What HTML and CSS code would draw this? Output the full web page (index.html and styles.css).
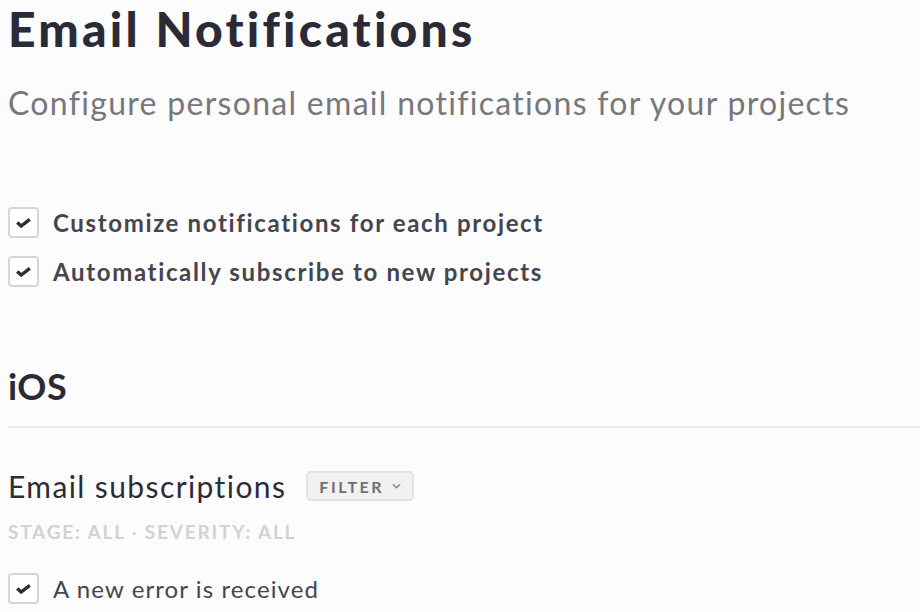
FILE: index.html
```html
<!DOCTYPE html>
<html lang="en">
<head>
    <meta charset="UTF-8">
    <meta name="viewport" content="width=device-width, initial-scale=1.0">
    <title>Email Notifications</title>
    <link rel="stylesheet" href="styles.css">
</head>
<body>

    <div class="page">
        <h1 class="title">Email Notifications</h1>
        <p class="subtitle">Configure personal email notifications for your projects</p>

        <div class="options">
            <label class="check-row bold">
                <span class="box">
                    <svg viewBox="0 0 15 10" width="15" height="10"><path d="M1.2 4.4 L5.2 8 L13.8 1.4" fill="none" stroke="#2e2e36" stroke-width="3.4"/></svg>
                </span>
                Customize notifications for each project
            </label>
            <label class="check-row bold">
                <span class="box">
                    <svg viewBox="0 0 15 10" width="15" height="10"><path d="M1.2 4.4 L5.2 8 L13.8 1.4" fill="none" stroke="#2e2e36" stroke-width="3.4"/></svg>
                </span>
                Automatically subscribe to new projects
            </label>
        </div>

        <h2 class="section">iOS</h2>

        <div class="subs-head">
            <span class="subs-title">Email subscriptions</span>
            <span class="filter">FILTER
                <svg viewBox="0 0 10 6" width="9" height="6"><path d="M1 1 L5 5 L9 1" fill="none" stroke="#888" stroke-width="1.6"/></svg>
            </span>
        </div>
        <div class="subs-meta">STAGE: ALL <span class="dot">·</span> SEVERITY: ALL</div>

        <label class="check-row">
            <span class="box">
                <svg viewBox="0 0 15 10" width="15" height="10"><path d="M1.2 4.4 L5.2 8 L13.8 1.4" fill="none" stroke="#2e2e36" stroke-width="3.4"/></svg>
            </span>
            A new error is received
        </label>
    </div>

</body>
</html>
```

FILE: styles.css
```css
body {
    margin: 0;
    background-color: #fcfcfc;
    font-family: Lato, "Open Sans", sans-serif;
    font-variant-ligatures: none;
    color: #2c2c38;
    overflow: hidden;
}
.page {
    padding-left: 8px;
}
.title {
    font-size: 48px;
    font-weight: 900;
    line-height: normal;
    letter-spacing: 3.2px;
    margin: 0;
    color: #2b2b38;
}
.subtitle {
    font-size: 32px;
    line-height: 40px;
    letter-spacing: 1.3px;
    margin: 26px 0 0;
    color: #77777c;
}
.options {
    margin-top: 84px;
}
.check-row {
    display: flex;
    align-items: center;
    gap: 14px;
    font-size: 24px;
    letter-spacing: 1.1px;
    color: #45454d;
    margin-bottom: 18px;
}
.check-row.bold {
    font-weight: bold;
    letter-spacing: 1.65px;
}
.box {
    width: 27px;
    height: 27px;
    border: 2px solid #d6d6d8;
    border-radius: 4px;
    background: #fff;
    display: flex;
    align-items: center;
    justify-content: center;
    flex: none;
}
.section {
    font-size: 36px;
    font-weight: bold;
    line-height: 44px;
    letter-spacing: 0.5px;
    margin: 77px 0 0;
    padding-bottom: 18px;
    border-bottom: 2px solid #ececec;
    color: #2b2b38;
}
.subs-head {
    display: flex;
    align-items: center;
    gap: 20px;
    margin-top: 40px;
}
.subs-title {
    font-size: 30px;
    letter-spacing: 1.4px;
    color: #2c2c38;
}
.filter {
    display: flex;
    align-items: center;
    gap: 8px;
    height: 26px;
    padding: 0 11px;
    border: 2px solid #e2e2e4;
    border-radius: 5px;
    background: #f1f1f2;
    font-size: 16px;
    font-weight: bold;
    letter-spacing: 2.5px;
    color: #6f6f75;
}
.subs-meta {
    margin-top: 16px;
    font-size: 19px;
    font-weight: bold;
    color: #d2d2d4;
    letter-spacing: 1.8px;
}
.subs-meta .dot {
    font-weight: normal;
}
.subs-meta + .check-row {
    margin-top: 30px;
}
```
